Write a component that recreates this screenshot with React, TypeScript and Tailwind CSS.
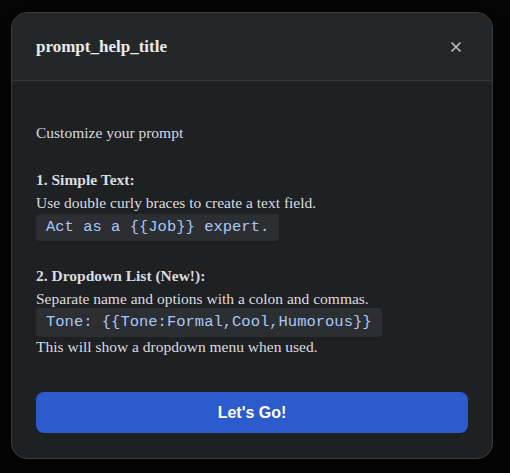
import React from 'react';

function App() {
  return (
    <div className="min-h-screen w-full bg-[#050505] pt-3 pl-[11px] font-['Liberation_Serif',serif]">
      <div className="w-[482px] h-[447px] rounded-2xl border border-[#3c3d40] bg-[#1f2022] overflow-hidden flex flex-col shadow-2xl">
        {/* Header */}
        <div className="h-[68px] shrink-0 flex items-center justify-between pl-6 pr-[26px] bg-[#252628] border-b border-[#36373a]">
          <h2 className="text-[17px] font-bold text-[#e8eaed]">prompt_help_title</h2>
          <button className="text-[#bdc1c6] w-5 h-5 flex items-center justify-center">
            <svg width="12" height="12" viewBox="0 0 12 12" fill="none" stroke="currentColor" strokeWidth="1.6">
              <path d="M1.5 1.5 L10.5 10.5 M10.5 1.5 L1.5 10.5" />
            </svg>
          </button>
        </div>

        {/* Body */}
        <div className="flex-1 px-6 pt-[40px] text-[15.5px] leading-[23px] text-[#dadce0]">
          <p>Customize your prompt</p>

          <p className="mt-[24px] font-bold">1. Simple Text:</p>
          <p>Use double curly braces to create a text field.</p>
          <code className="block w-fit h-[27px] px-[10px] rounded bg-[#2d2e31] text-[#a8c7fa] font-['Liberation_Mono',monospace] text-[15.5px] leading-[27px]">
            Act as a {'{{Job}}'} expert.
          </code>

          <p className="mt-[23px] font-bold">2. Dropdown List (New!):</p>
          <p>Separate name and options with a colon and commas.</p>
          <code className="block w-fit -mt-[2px] h-[29px] px-[10px] rounded bg-[#2d2e31] text-[#a8c7fa] font-['Liberation_Mono',monospace] text-[15.5px] leading-[29px]">
            Tone: {'{{Tone:Formal,Cool,Humorous}}'}
          </code>
          <p className="-mt-[2px]">This will show a dropdown menu when used.</p>
        </div>

        {/* Footer */}
        <div className="px-6 pb-[25px]">
          <button className="w-full h-[41px] rounded-lg bg-[#2b5bcc] text-white font-bold text-[16px] font-['Liberation_Sans',sans-serif]">
            Let's Go!
          </button>
        </div>
      </div>
    </div>
  );
}

export default App;
